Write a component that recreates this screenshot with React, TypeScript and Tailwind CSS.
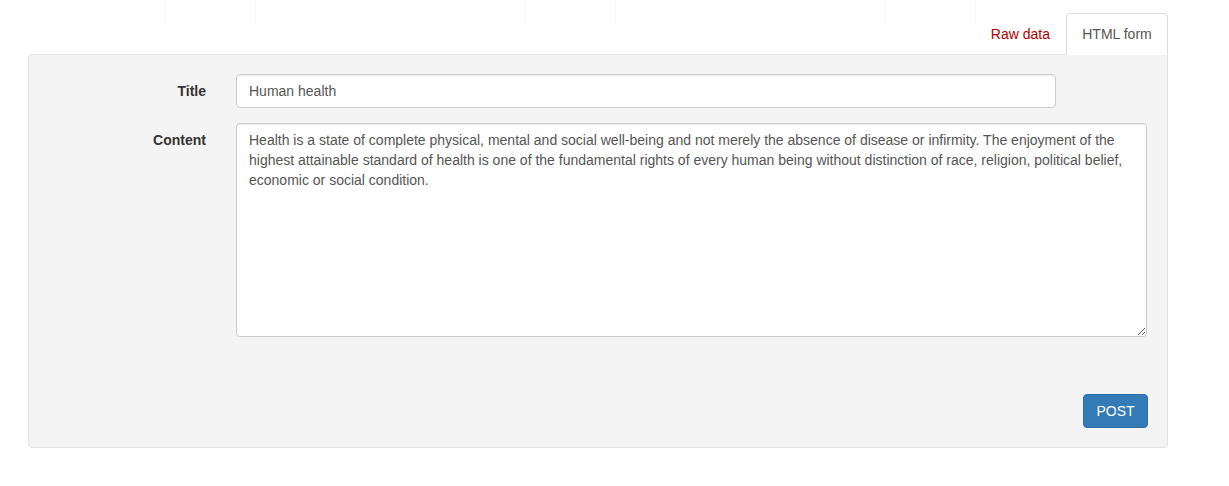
const content =
  "Health is a state of complete physical, mental and social well-being and not merely the absence of disease or infirmity. The enjoyment of the highest attainable standard of health is one of the fundamental rights of every human being without distinction of race, religion, political belief, economic or social condition.";

const gridCols = [76, 165, 255, 345, 435, 525, 615, 705, 795, 885, 975];

export default function App() {
  return (
    <div
      className="w-[1229px] h-[486px] bg-white text-[14px] leading-[20px] text-[#333]"
      style={{ fontFamily: '"Liberation Sans", Arial, sans-serif' }}
    >
      {/* faint table remnants at top */}
      <div className="flex h-[29px]">
        {gridCols.map((x, i) => (
          <div
            key={x}
            className={`h-full border-l border-[#fbfbfb] ${i === 0 ? "ml-[75px]" : "ml-[89px]"}`}
          />
        ))}
      </div>

      <div className="ml-[28px] w-[1140px] -mt-[16px]">
        {/* tabs */}
        <div className="relative z-10 flex justify-end -mb-px">
          <div className="px-[15px] py-[10px] text-[#b20000] border border-transparent">
            Raw data
          </div>
          <div className="w-[102px] text-center py-[10px] bg-white border border-[#ddd] border-b-white rounded-t-[4px] text-[#555]">
            HTML form
          </div>
        </div>

        {/* well */}
        <div className="bg-[#f4f4f4] border border-[#e3e3e3] rounded-[4px] rounded-tr-none p-[19px]">
          <div className="flex items-start mb-[15px]">
            <label className="w-[173px] pr-[15px] pt-[7px] text-right font-bold">Title</label>
            <div className="pl-[15px]">
              <div className="w-[820px] h-[34px] px-[12px] py-[6px] bg-white border border-[#ccc] rounded-[4px] text-[#555] shadow-[inset_0_1px_1px_rgba(0,0,0,0.075)]">
                Human health
              </div>
            </div>
          </div>

          <div className="flex items-start mb-[15px]">
            <label className="w-[173px] pr-[15px] pt-[7px] text-right font-bold">Content</label>
            <div className="pl-[15px]">
              <textarea
                readOnly
                defaultValue={content}
                className="block w-[911px] h-[214px] px-[12px] py-[6px] bg-white border border-[#ccc] rounded-[4px] text-[#555] text-[14px] leading-[20px] shadow-[inset_0_1px_1px_rgba(0,0,0,0.075)] outline-none resize-y"
                style={{ fontFamily: '"Liberation Sans", Arial, sans-serif' }}
              />
            </div>
          </div>

          <div className="flex justify-end pt-[42px]">
            <button className="w-[65px] h-[34px] bg-[#337ab7] border border-[#2e6da4] rounded-[4px] text-white text-[14px]">
              POST
            </button>
          </div>
        </div>
      </div>
    </div>
  );
}
